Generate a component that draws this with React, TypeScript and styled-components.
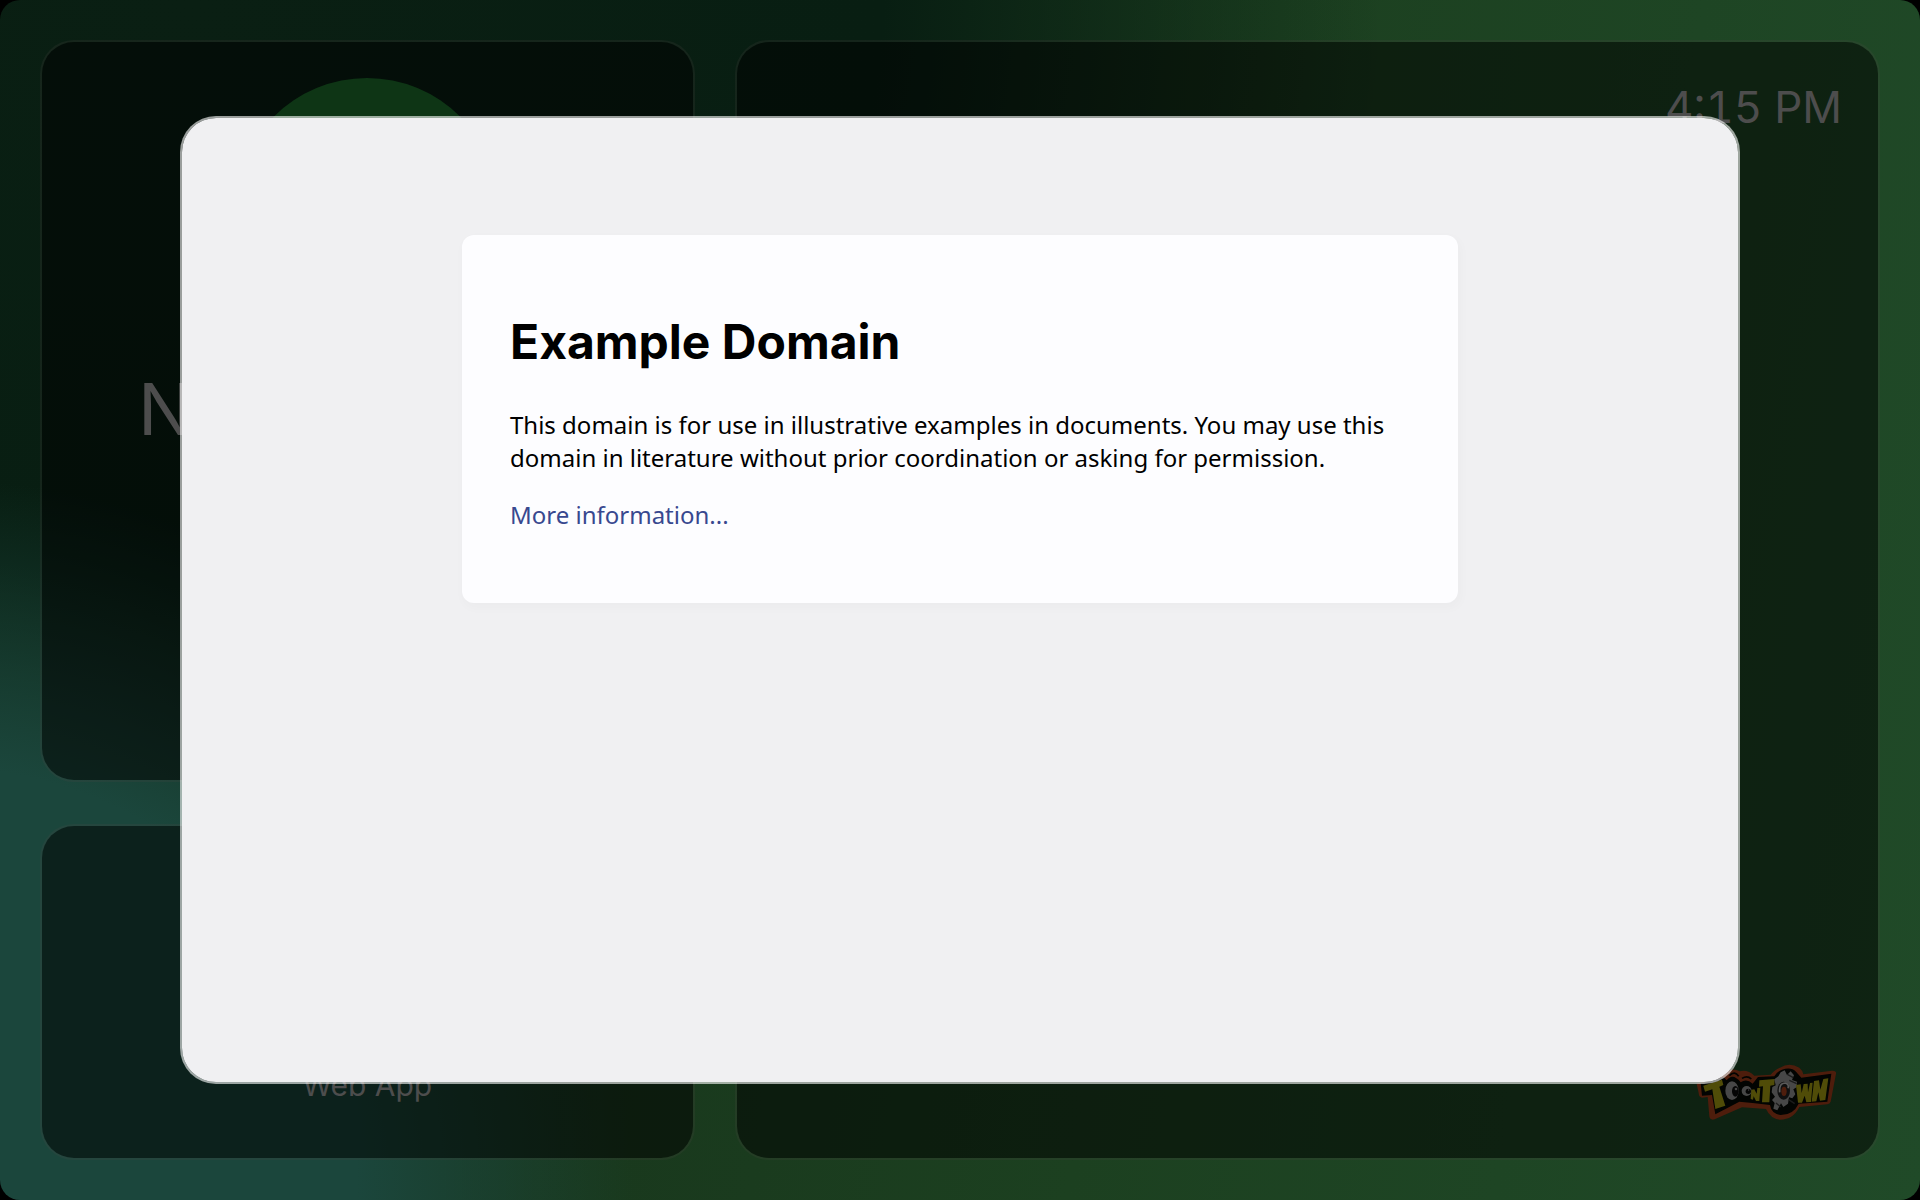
import React from "react";
import styled, { createGlobalStyle } from "styled-components";

const Global = createGlobalStyle`
  *, *::before, *::after { box-sizing: border-box; }
  html, body { margin: 0; background: #000; }
  body { font-family: Inter, "Liberation Sans", sans-serif; }
`;

const Screen = styled.main`
  position: relative;
  display: grid;
  grid-template-columns: 4fr 7fr;
  gap: 40px;
  min-height: 100vh;
  padding: 40px;
  border-radius: 20px;
  overflow: hidden;
  background:
    radial-gradient(ellipse 36% 60% at -3% 100%, #1b463c 0%, #1b463c 60%, rgba(27, 70, 60, 0) 100%),
    radial-gradient(ellipse 62% 84% at 10% 0%, #0a1f13 0%, #081e12 58%, rgba(8, 30, 18, 0) 100%),
    linear-gradient(100deg, #18361c 30%, #1c4020 60%, #204a28 100%);
`;

const Column = styled.div`
  display: grid;
  grid-template-rows: 742fr 336fr;
  gap: 42px;
`;

const Tile = styled.section<{ $align?: string }>`
  display: flex;
  flex-direction: column;
  align-items: ${(p) => p.$align ?? "center"};
  justify-content: space-between;
  padding: 36px;
  border: 2px solid rgba(84, 72, 72, 0.18);
  border-radius: 34px;
  background: rgba(0, 0, 0, 0.52);
  background-clip: padding-box;
  color: #4d4d4d;
`;

const Avatar = styled.div`
  width: 264px;
  height: 264px;
  border-radius: 50%;
  background: #0e3515;
`;

const Profile = styled(Tile)`
  justify-content: flex-start;
  gap: 27px;
`;

const Name = styled.h2`
  align-self: flex-start;
  margin: 0 60px;
  font-size: 72px;
  line-height: 80px;
  font-weight: 400;
  white-space: nowrap;
`;

const AppTile = styled(Tile)`
  justify-content: flex-end;
  padding-bottom: 55px;
`;

const AppLabel = styled.span`
  font-size: 30px;
  line-height: 36px;
`;

const Clock = styled.time`
  font-size: 44px;
  line-height: 58px;
  font-variant-numeric: tabular-nums;
`;

const Logo = styled.svg`
  width: 140px;
  height: 56px;
  margin: 0 6px 2px 0;
`;

const Overlay = styled.div`
  position: absolute;
  inset: 0;
  display: grid;
  place-items: center;
`;

const Dialog = styled.div`
  width: 81.25%;
  height: 968px;
  padding: 117px 40px;
  border: 2px solid rgba(255, 255, 255, 0.6);
  border-radius: 36px;
  background: #f0f0f2;
  background-clip: padding-box;
`;

const Article = styled.article`
  max-width: 996px;
  margin: 0 auto;
  padding: 48px;
  border-radius: 12px;
  background: #fdfdff;
  box-shadow: 2px 4px 10px 2px rgba(0, 0, 0, 0.02);
  color: #000;
  font-family: "Noto Sans", "Open Sans", sans-serif;
  font-size: 24px;
  line-height: 33px;
`;

const Title = styled.h1`
  margin: 32px 0 40px;
  font-family: Inter, sans-serif;
  font-size: 48px;
  line-height: 53px;
  font-weight: 700;
`;

const Text = styled.p`
  margin: 24px 0;
`;

const Link = styled.a`
  color: #38488f;
  text-decoration: none;
`;

function ToontownLogo() {
  return (
    <Logo viewBox="170 73 420 168" role="img" aria-label="Toontown">
      <path
        d="M172 133L250 108Q275 80 300 95Q325 88 345 108L394 105Q408 88 422 84Q450 66 480 84Q490 92 492 104L578 93Q592 92 590 102L574 186Q572 193 564 194L480 202Q462 240 422 240Q394 238 380 208L308 203L226 239Q212 243 210 230L205 172L188 174Q178 172 178 160Z"
        fill="#4e1d0c"
      />
      <path
        d="M184 130L252 112L262 122Q280 98 304 128Q322 116 340 132L356 112L405 110Q415 94 428 90Q455 80 470 96L486 114L576 102L564 186L478 192Q462 226 424 226Q396 222 392 196L340 190L300 186L228 224L218 166L188 168Z"
        fill="#020402"
      />
      <path d="M270 108Q286 92 298 110M308 116Q324 106 336 118" fill="none" stroke="#020402" strokeWidth="5" />
      <path d="M192 138L248 120L252 136L240 141L258 198L228 208L219 149L197 156Z" fill="#504c08" />
      <ellipse cx="278" cy="153" rx="20" ry="28" fill="#474747" />
      <ellipse cx="288" cy="155" rx="10" ry="16" fill="#050505" />
      <circle cx="290" cy="148" r="4" fill="#474747" />
      <circle cx="322" cy="154" r="15" fill="#474747" />
      <circle cx="327" cy="155" r="8" fill="#050505" />
      <circle cx="328" cy="151" r="2" fill="#474747" />
      <path d="M334 178L336 150L345 149L352 162L354 145L363 144L360 184L350 184L343 170L341 180Z" fill="#504c08" />
      <path d="M360 122L406 118L405 136L393 138L390 188L368 188L371 140L359 141Z" fill="#504c08" />
      <path
        d="M424 98L436 92L443 106L454 95L464 107L458 121L473 126L472 143L462 149L468 164L459 176L449 173L446 192L432 202L425 191L414 212L402 207L406 190L398 181L407 171L397 158L399 142L409 137L405 119L417 110Z"
        fill="#474747"
      />
      <path d="M444 104L462 114M450 122L472 132M410 190L424 202M448 180L466 192" stroke="#1c1c1c" strokeWidth="4" />
      <ellipse cx="433" cy="153" rx="19" ry="27" fill="#101010" />
      <path d="M421 158Q418 130 438 130Q450 134 446 146" fill="none" stroke="#5a5a5a" strokeWidth="5" />
      <ellipse cx="434" cy="155" rx="8" ry="14" fill="#4e1d0c" />
      <path d="M470 136L484 134L487 160L493 133L505 132L506 158L512 130L520 129L515 187L501 188L496 168L488 189L476 189Z" fill="#504c08" />
      <path d="M524 124L539 122L543 150L552 118L567 116L558 181L542 183L537 158L531 185L517 186Z" fill="#504c08" />
    </Logo>
  );
}

export default function App() {
  return (
    <>
      <Global />
      <Screen>
        <Column>
          <Profile>
            <Avatar />
            <Name>Nicholas</Name>
          </Profile>
          <AppTile>
            <AppLabel>Web App</AppLabel>
          </AppTile>
        </Column>
        <Tile $align="flex-end">
          <Clock>4:15 PM</Clock>
          <ToontownLogo />
        </Tile>
        <Overlay>
          <Dialog role="dialog" aria-label="Example Domain">
            <Article>
              <Title>Example Domain</Title>
              <Text>
                This domain is for use in illustrative examples in documents. You may use this domain in
                literature without prior coordination or asking for permission.
              </Text>
              <Text>
                <Link href="#more">More information...</Link>
              </Text>
            </Article>
          </Dialog>
        </Overlay>
      </Screen>
    </>
  );
}
